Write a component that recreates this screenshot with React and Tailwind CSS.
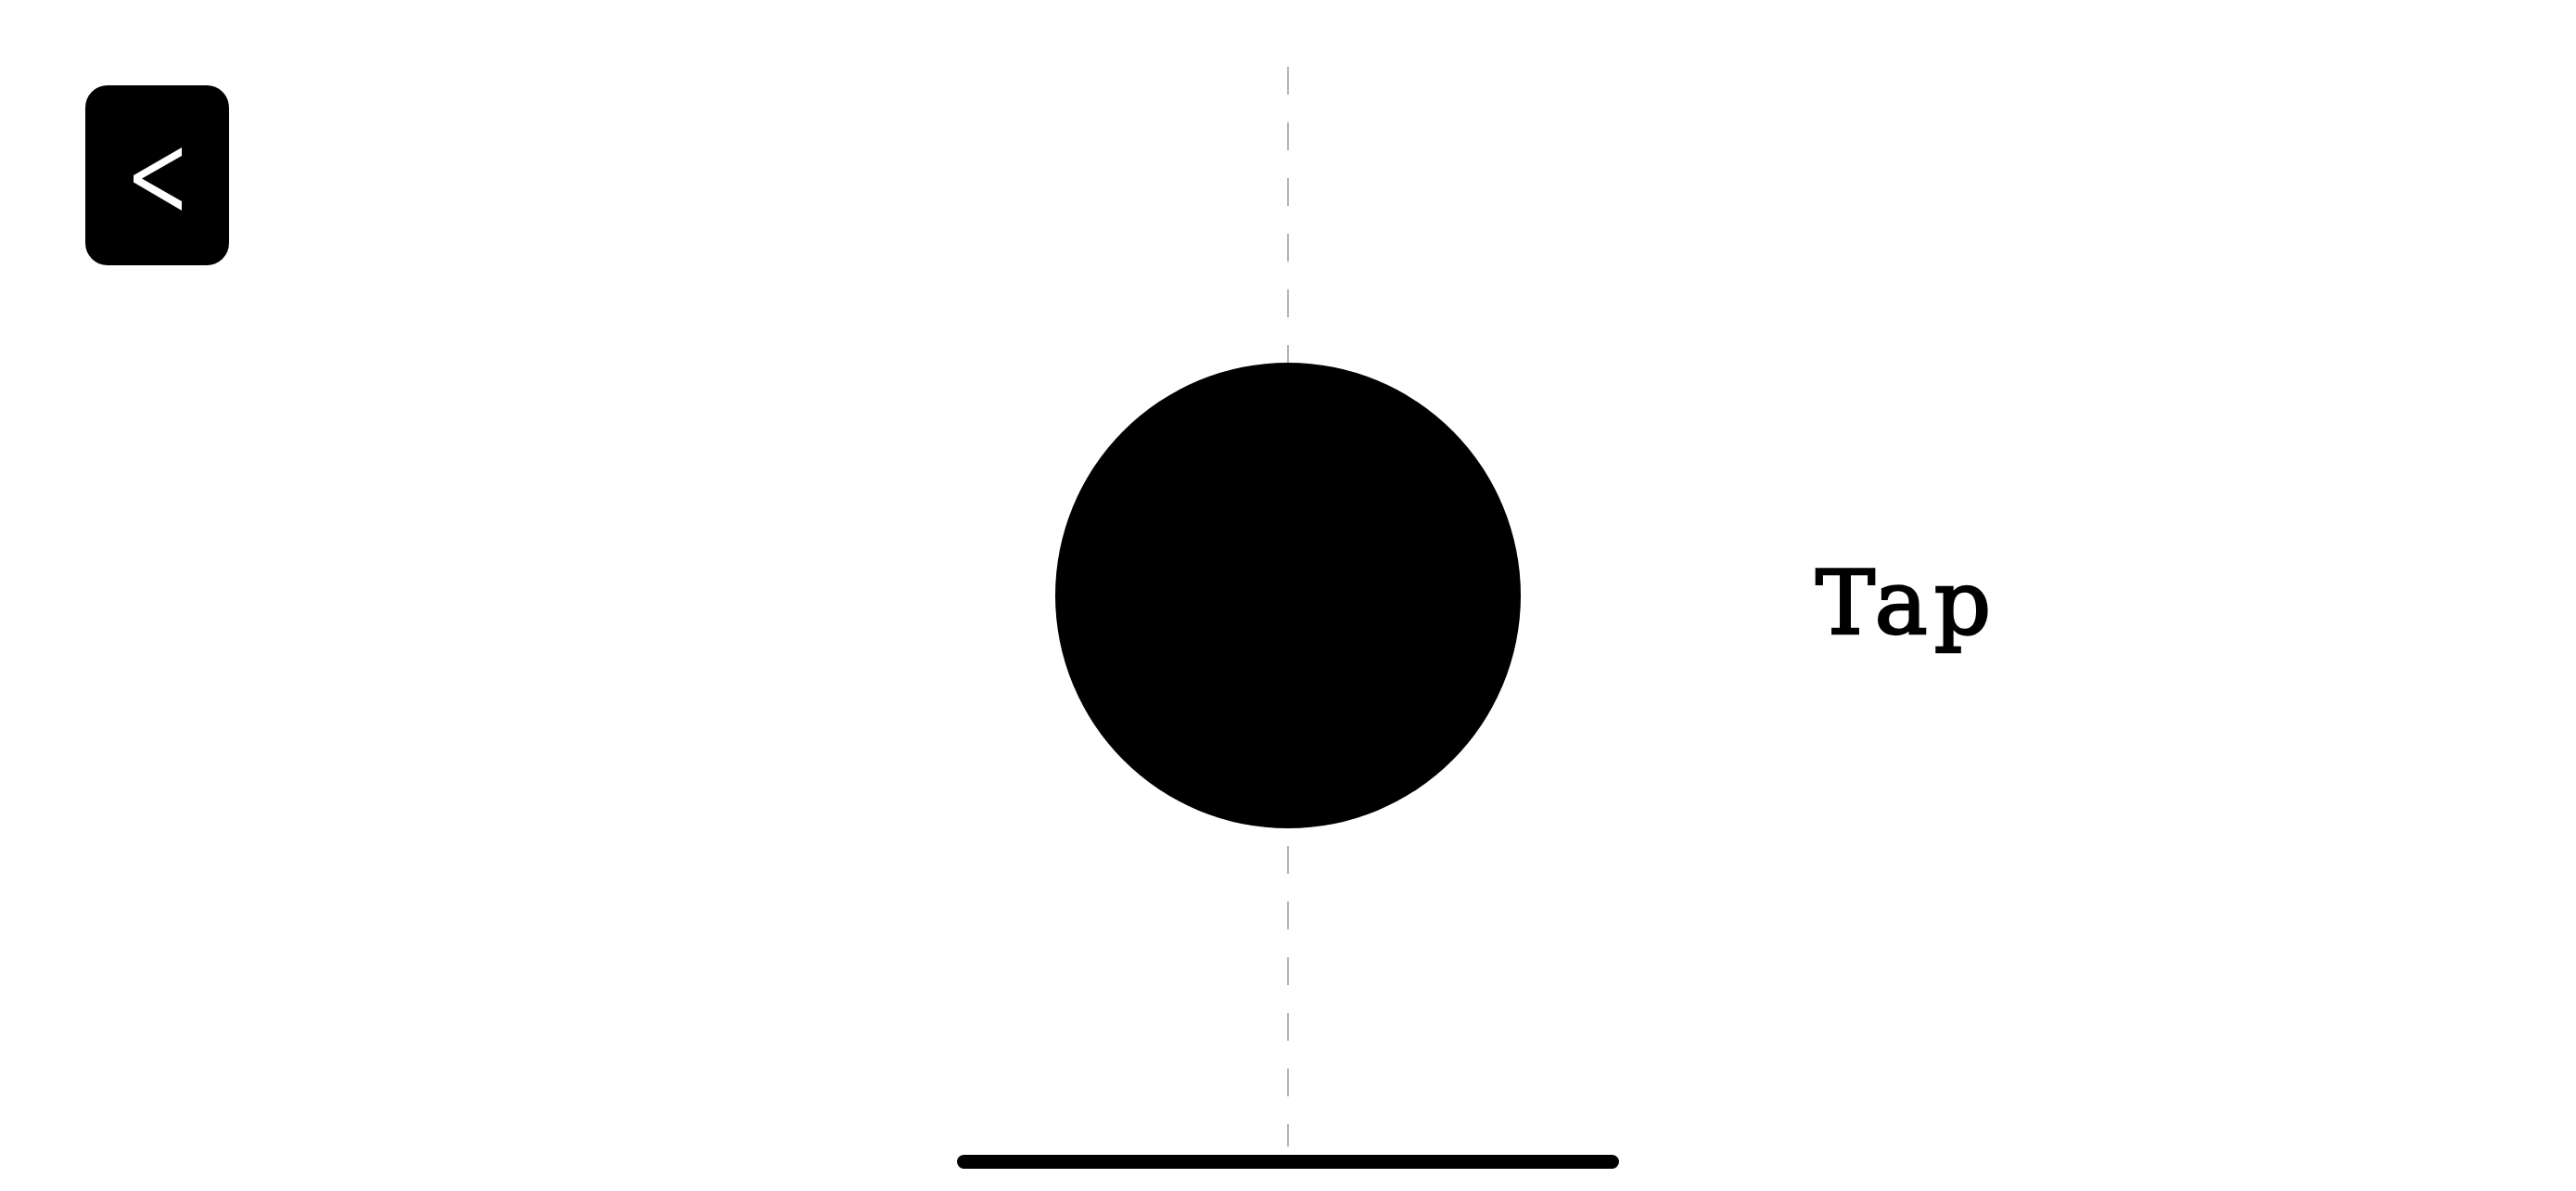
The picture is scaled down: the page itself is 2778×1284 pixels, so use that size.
export default function App() {
  return (
    <div className="relative h-screen w-screen overflow-hidden bg-white">
      {/* guide line behind the ball */}
      <div className="absolute left-1/2 top-[72px] bottom-[48px] w-[2px] -translate-x-1/2 bg-[repeating-linear-gradient(to_bottom,#b3b3b3_0px,#b3b3b3_30px,transparent_30px,transparent_60px)]" />

      <div className="relative grid h-full grid-cols-[1fr_auto_1fr] items-center">
        <div />
        <div className="h-[502px] w-[502px] rounded-full bg-black" />
        <div className="pl-[318px]">
          <span className="mt-[16px] block font-['DejaVu_Serif',serif] text-[96px] leading-none tracking-[7px] text-black [-webkit-text-stroke:2.5px_black]">
            Tap
          </span>
        </div>
      </div>

      <button className="absolute left-[92px] top-[92px] flex h-[194px] w-[155px] items-center justify-center rounded-[24px] bg-black">
        <svg width="52" height="68" viewBox="0 0 52 68" className="mt-[8px]">
          <polygon points="52,0 52,9 9,33.5 52,58 52,68 0,37.5 0,30" fill="#fff" />
        </svg>
      </button>

      <div className="absolute bottom-[24px] left-1/2 h-[15px] w-[714px] -translate-x-1/2 rounded-full bg-black" />
    </div>
  );
}
